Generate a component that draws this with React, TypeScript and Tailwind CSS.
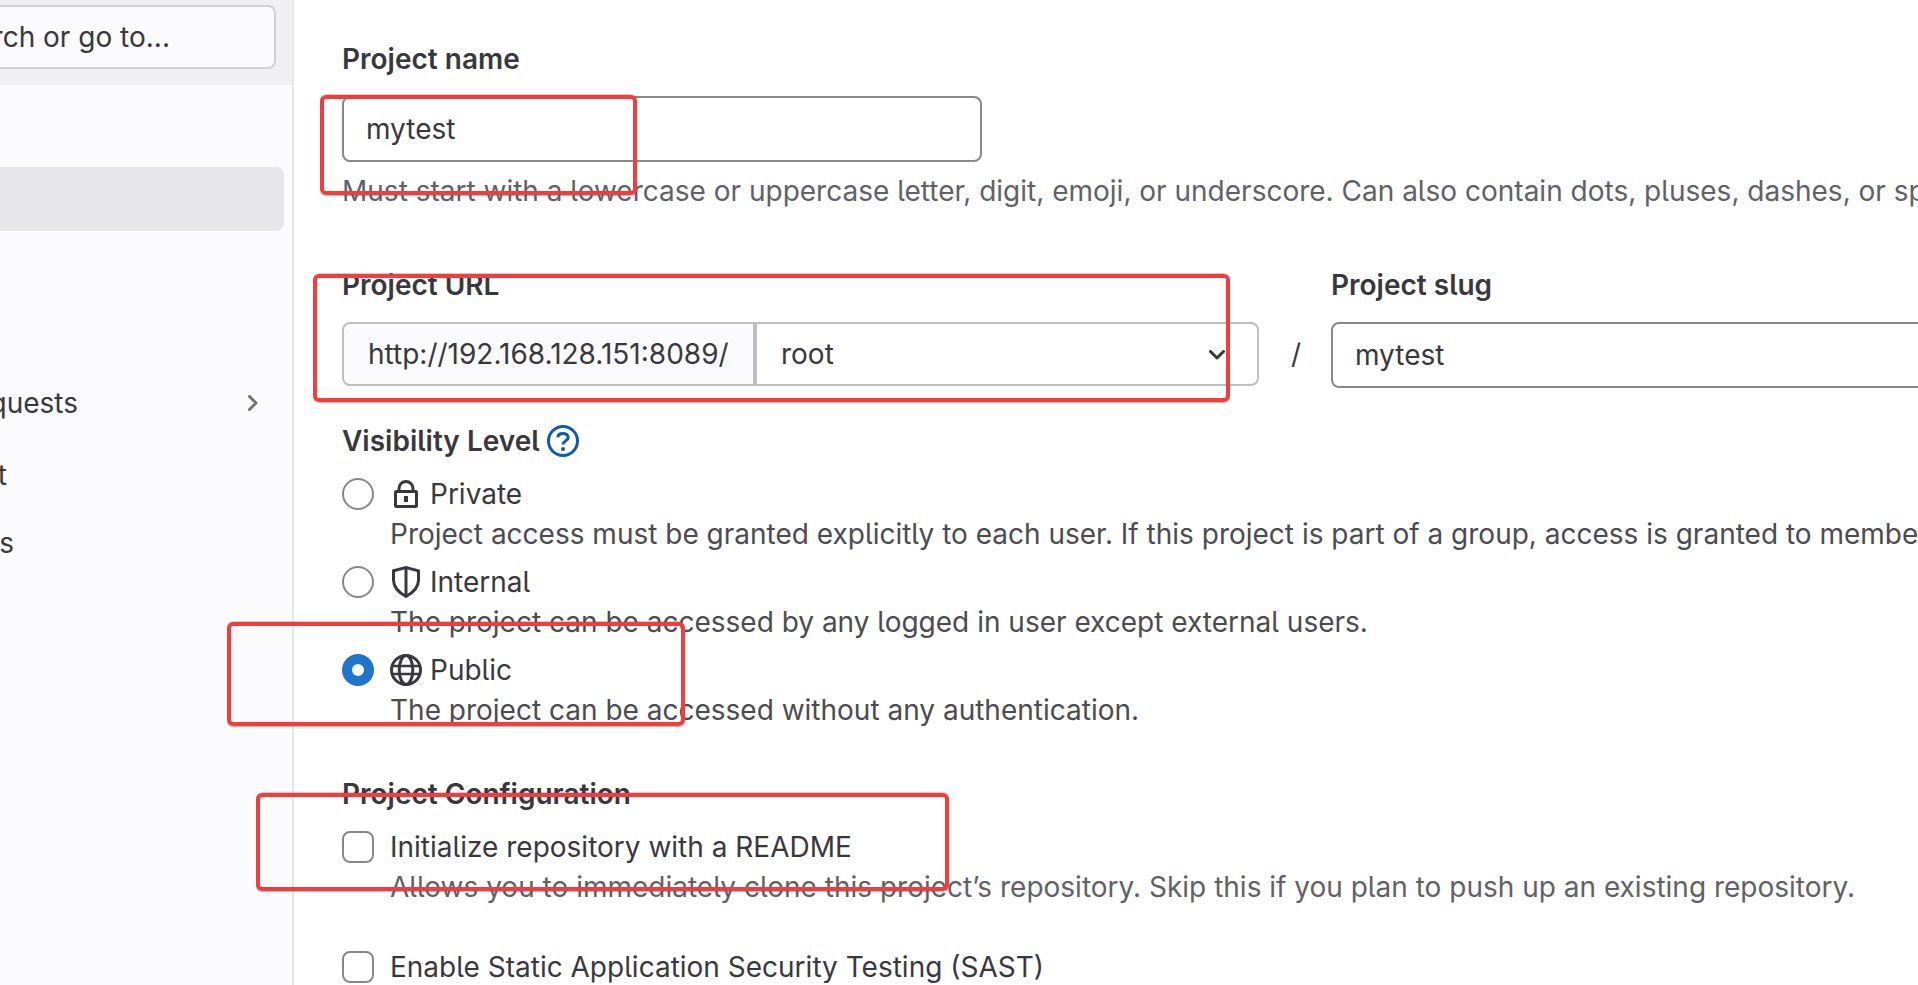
import { useState } from 'react';
import type { ReactNode } from 'react';

const navItems = [
  { label: 'Merge requests', width: 'w-[78px]', gap: 'mb-1', expandable: true },
  { label: 'To-Do List', width: 'w-[7px]', gap: '', expandable: false },
  { label: 'Milestones', width: 'w-[14px]', gap: '', expandable: false },
];

function Sidebar() {
  return (
    <aside className="w-[294px] shrink-0 overflow-hidden border-r-2 border-[#e7e7ea] bg-[#fbfafd]">
      <div className="flex h-[85px] items-start bg-[#f0f0f2] pt-[5px] pr-4">
        <button
          type="button"
          className="flex h-16 w-full items-center justify-end rounded-r-lg border-2 border-l-0 border-[#d0d0d4] bg-[#fbfafd] pr-26 whitespace-nowrap"
        >
          rch or go to...
        </button>
      </div>
      <nav className="flex flex-col gap-1 pt-[82px] pr-2">
        <a href="#projects" aria-label="Projects" aria-current="page" className="mb-[136px] block h-16 rounded-r-lg bg-[#e7e7e9]" />
        {navItems.map((item) => (
          <a
            key={item.label}
            href="#section"
            className={`flex h-16 items-center justify-between pr-[26px] ${item.gap}`}
          >
            <span className={`flex justify-end whitespace-nowrap ${item.width}`}>{item.label}</span>
            {item.expandable && (
              <svg width="10" height="16" viewBox="0 0 10 16" fill="none" className="text-[#737278]" aria-hidden="true">
                <path d="M1.5 1.5 L8 8 L1.5 14.5" stroke="currentColor" strokeWidth="3" strokeLinecap="round" strokeLinejoin="round" />
              </svg>
            )}
          </a>
        ))}
      </nav>
    </aside>
  );
}

function LockIcon() {
  return (
    <svg width="32" height="32" viewBox="0 0 16 16" fill="none" stroke="currentColor" aria-hidden="true">
      <rect x="2.75" y="6.75" width="10.5" height="7.5" rx=".4" strokeWidth="1.5" />
      <path d="M4.5 6.5V5.2a3.5 3.5 0 0 1 7 0v1.3" strokeWidth="1.5" />
      <path d="M8 9v3" strokeWidth="2" />
    </svg>
  );
}

function ShieldIcon() {
  return (
    <svg width="32" height="32" viewBox="0 0 16 16" fill="none" stroke="currentColor" aria-hidden="true">
      <path d="M1.75 2.4 8 .8l6.25 1.6V7c0 3.4-2.1 6-6.25 8.2C3.85 13 1.75 10.4 1.75 7Z" strokeWidth="1.5" />
      <path d="M8 1v14" strokeWidth="1.5" />
    </svg>
  );
}

function GlobeIcon() {
  return (
    <svg width="32" height="32" viewBox="0 0 16 16" fill="none" stroke="currentColor" strokeWidth="1.5" aria-hidden="true">
      <circle cx="8" cy="8" r="7.25" />
      <ellipse cx="8" cy="8" rx="3.4" ry="7.25" />
      <path d="M1.3 6h13.4M1.3 10h13.4" strokeWidth="1.3" />
    </svg>
  );
}

const levels: { id: string; label: string; help: string; icon: ReactNode }[] = [
  {
    id: 'private',
    label: 'Private',
    help: 'Project access must be granted explicitly to each user. If this project is part of a group, access is granted to members of the group.',
    icon: <LockIcon />,
  },
  {
    id: 'internal',
    label: 'Internal',
    help: 'The project can be accessed by any logged in user except external users.',
    icon: <ShieldIcon />,
  },
  {
    id: 'public',
    label: 'Public',
    help: 'The project can be accessed without any authentication.',
    icon: <GlobeIcon />,
  },
];

const fieldClass =
  'h-[66px] rounded-lg border-2 border-[#89888d] bg-white px-[22px] outline-none';
const checkboxClass =
  'size-8 shrink-0 appearance-none rounded-lg border-2 border-[#89888d] bg-white checked:border-[#1f75cb] checked:bg-[#1f75cb]';

function Outline({ className }: { className: string }) {
  return (
    <div
      aria-hidden="true"
      className={`pointer-events-none absolute rounded-md border-4 border-[#f43c3c] shadow-[0_1px_0_rgba(90,60,60,0.35),0_-1px_0_rgba(90,60,60,0.25)] ${className}`}
    />
  );
}

export default function App() {
  const [name, setName] = useState('mytest');
  const [slug, setSlug] = useState('mytest');
  const [level, setLevel] = useState('public');

  return (
    <div className="relative flex h-screen min-h-0 overflow-hidden bg-white font-['Inter','Liberation_Sans',sans-serif] text-[28px] leading-10 text-[#3a383f] [font-feature-settings:'cv05']">
      <Sidebar />
      <main className="min-w-0 flex-1 overflow-hidden pt-[39px] pl-12">
        <form onSubmit={(e) => e.preventDefault()}>
          <label htmlFor="name" className="block font-semibold">
            Project name
          </label>
          <input
            id="name"
            value={name}
            onChange={(e) => setName(e.target.value)}
            className={`mt-[17px] block w-[640px] ${fieldClass}`}
          />
          <p className="mt-[9px] whitespace-nowrap text-[#626168]">
            Must start with a lowercase or uppercase letter, digit, emoji, or underscore. Can also contain dots, pluses, dashes, or spaces.
          </p>

          <div className="mt-[54px] flex">
            <div className="w-[917px] shrink-0">
              <label htmlFor="namespace" className="block font-semibold">
                Project URL
              </label>
              <div className="mt-[17px] flex h-16">
                <span className="flex w-[413px] items-center rounded-l-lg border-2 border-[#bfbfc3] bg-[#fbfafd] pl-6">
                  http://192.168.128.151:8089/
                </span>
                <div className="relative flex-1">
                  <select
                    id="namespace"
                    className="size-full appearance-none rounded-r-lg border-2 border-[#bfbfc3] bg-white px-6 outline-none"
                  >
                    <option>root</option>
                  </select>
                  <svg width="16" height="10" viewBox="0 0 16 10" fill="none" className="pointer-events-none absolute top-7 right-[34px]" aria-hidden="true">
                    <path d="M1.5 1.5 8 8l6.5-6.5" stroke="currentColor" strokeWidth="3" strokeLinecap="round" strokeLinejoin="round" />
                  </svg>
                </div>
              </div>
            </div>
            <span className="w-[72px] shrink-0 pt-[69px] pl-8">/</span>
            <div className="shrink-0 grow">
              <label htmlFor="slug" className="block font-semibold">
                Project slug
              </label>
              <input
                id="slug"
                value={slug}
                onChange={(e) => setSlug(e.target.value)}
                className={`mt-[17px] block w-[640px] ${fieldClass}`}
              />
            </div>
          </div>

          <fieldset className="mt-[33px]">
            <legend className="flex items-center gap-[7px] font-semibold">
              Visibility Level
              <a href="#help" aria-label="Visibility help" className="text-[#0b5cad]">
                <svg width="32" height="32" viewBox="0 0 16 16" fill="none" stroke="currentColor" aria-hidden="true">
                  <circle cx="8" cy="8" r="7.25" strokeWidth="1.5" />
                  <path d="M5.4 6.2C5.5 4.9 6.6 4.2 8 4.2s2.6.8 2.6 2.1C10.6 7.9 8 7.9 8 9.8" strokeWidth="1.5" />
                  <circle cx="8" cy="12" r="1" fill="currentColor" stroke="none" />
                </svg>
              </a>
            </legend>
            <div className="mt-[13px] flex flex-col gap-2">
              {levels.map((l) => (
                <div key={l.id} className="flex items-start gap-4">
                  <input
                    type="radio"
                    name="visibility"
                    id={l.id}
                    checked={level === l.id}
                    onChange={() => setLevel(l.id)}
                    className="mt-1 size-8 shrink-0 appearance-none rounded-full border-2 border-[#89888d] bg-white checked:border-10 checked:border-[#1f75cb]"
                  />
                  <div>
                    <label htmlFor={l.id} className="flex items-center gap-2">
                      {l.icon}
                      {l.label}
                    </label>
                    <p className="whitespace-nowrap text-[#4c4b51]">{l.help}</p>
                  </div>
                </div>
              ))}
            </div>
          </fieldset>

          <fieldset className="mt-11">
            <legend className="font-semibold">Project Configuration</legend>
            <div className="mt-[13px] flex items-start gap-4">
              <input type="checkbox" id="readme" className={`mt-1 ${checkboxClass}`} />
              <div>
                <label htmlFor="readme" className="block">
                  Initialize repository with a README
                </label>
                <p className="whitespace-nowrap text-[#626168]">
                  Allows you to immediately clone this project’s repository. Skip this if you plan to push up an existing repository.
                </p>
              </div>
            </div>
            <div className="mt-10 flex items-start gap-4">
              <input type="checkbox" id="sast" className={`mt-1 ${checkboxClass}`} />
              <label htmlFor="sast">Enable Static Application Security Testing (SAST)</label>
            </div>
          </fieldset>
        </form>
      </main>
      <Outline className="top-[95px] left-[320px] h-[100px] w-[317px]" />
      <Outline className="top-[274px] left-[313px] h-[128px] w-[917px]" />
      <Outline className="top-[622px] left-[227px] h-[104px] w-[458px]" />
      <Outline className="top-[793px] left-[256px] h-[98px] w-[693px]" />
    </div>
  );
}
